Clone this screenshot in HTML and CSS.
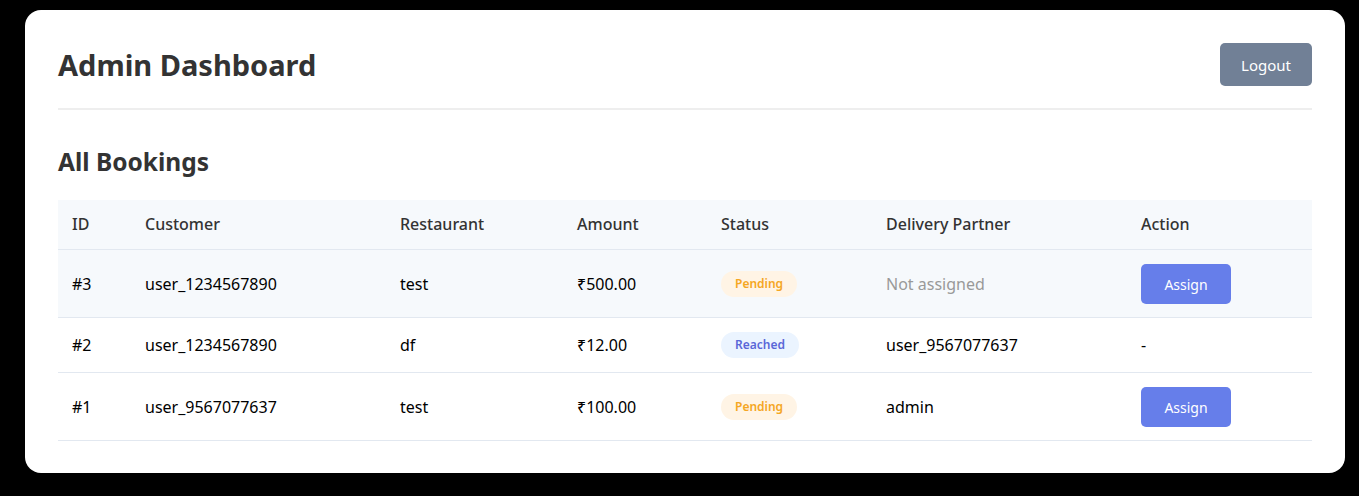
FILE: index.html
```html
<!DOCTYPE html>
<html lang="en">
<head>
<meta charset="utf-8">
<title>Admin Dashboard</title>
<link rel="stylesheet" href="styles.css">
</head>
<body>
<div class="card">
  <header class="top">
    <h1 class="title">Admin Dashboard</h1>
    <button class="btn btn-logout">Logout</button>
  </header>
  <h2 class="subtitle">All Bookings</h2>
  <table class="bookings">
    <thead>
      <tr>
        <th class="c-id">ID</th>
        <th class="c-cust">Customer</th>
        <th class="c-rest">Restaurant</th>
        <th class="c-amt">Amount</th>
        <th class="c-status">Status</th>
        <th class="c-partner">Delivery Partner</th>
        <th class="c-action">Action</th>
      </tr>
    </thead>
    <tbody>
      <tr class="row-hl">
        <td>#3</td>
        <td>user_1234567890</td>
        <td>test</td>
        <td>₹500.00</td>
        <td><span class="badge badge-pending">Pending</span></td>
        <td class="muted">Not assigned</td>
        <td><button class="btn btn-assign">Assign</button></td>
      </tr>
      <tr>
        <td>#2</td>
        <td>user_1234567890</td>
        <td>df</td>
        <td>₹12.00</td>
        <td><span class="badge badge-reached">Reached</span></td>
        <td>user_9567077637</td>
        <td>-</td>
      </tr>
      <tr>
        <td>#1</td>
        <td>user_9567077637</td>
        <td>test</td>
        <td>₹100.00</td>
        <td><span class="badge badge-pending">Pending</span></td>
        <td>admin</td>
        <td><button class="btn btn-assign">Assign</button></td>
      </tr>
    </tbody>
  </table>
</div>
</body>
</html>
```

FILE: styles.css
```css
html, body {
  margin: 0;
  padding: 0;
  background: #000;
}
body {
  padding: 10px 14px 23px 25px;
  font-family: "Noto Sans", "Open Sans", sans-serif;
  color: #000;
}
.card {
  background: #fff;
  border-radius: 16px;
  padding: 33px 33px 32px 33px;
}
.top {
  display: flex;
  justify-content: space-between;
  align-items: center;
  padding-bottom: 22px;
  border-bottom: 2px solid #eeeeee;
}
.title {
  margin: 0;
  font-size: 29px;
  font-weight: 700;
  color: #333;
  line-height: 43px;
}
.btn {
  font-family: inherit;
  border: none;
  color: #fff;
  cursor: pointer;
  border-radius: 5px;
}
.btn-logout {
  background: #718096;
  font-size: 15px;
  width: 92px;
  height: 43px;
}
.subtitle {
  margin: 36px 0 22px;
  font-size: 24.5px;
  font-weight: 700;
  color: #333;
  line-height: 32px;
}
.bookings {
  width: 100%;
  border-collapse: collapse;
  font-size: 16px;
}
.bookings th {
  background: #f6f9fc;
  text-align: left;
  font-weight: 500;
  color: #333;
  padding: 14px;
  line-height: 21px;
  border-bottom: 1px solid #e2e8f0;
}
.bookings td {
  padding: 14px 14px 13px;
  line-height: 27px;
  border-bottom: 1px solid #e2e8f0;
  vertical-align: middle;
}
.row-hl td { background: #f6f9fc; }
.c-id { width: 45px; }
.c-cust { width: 227px; }
.c-rest { width: 149px; }
.c-amt { width: 116px; }
.c-status { width: 137px; }
.c-partner { width: 227px; }
.muted { color: #999; }
.badge {
  display: inline-block;
  vertical-align: top;
  font-size: 12px;
  font-weight: 600;
  line-height: 16px;
  padding: 5px 14px;
  border-radius: 14px;
}
.badge-pending { background: #fff4e5; color: #f5a623; }
.badge-reached { background: #ebf4ff; color: #5a67d8; }
.btn-assign {
  background: #667eea;
  font-size: 14px;
  width: 90px;
  height: 40px;
  display: block;
}
```
